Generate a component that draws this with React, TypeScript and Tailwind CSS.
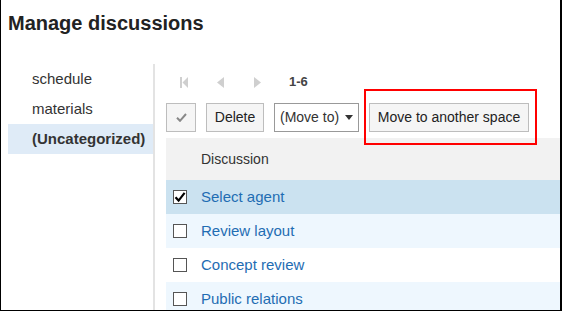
import React from "react";

const rows = [
  { name: "Select agent", checked: true, bg: "bg-[#cbe2f0]" },
  { name: "Review layout", checked: false, bg: "bg-[#eef7fe]" },
  { name: "Concept review", checked: false, bg: "bg-white" },
  { name: "Public relations", checked: false, bg: "bg-[#eef7fe]" },
];

const folders = [
  { name: "schedule", active: false },
  { name: "materials", active: false },
  { name: "(Uncategorized)", active: true },
];

function Checkbox({ checked }: { checked: boolean }) {
  return (
    <span className="flex h-[14px] w-[14px] items-center justify-center border border-[#555] bg-white">
      {checked && (
        <svg width="12" height="12" viewBox="0 0 12 12">
          <path d="M1.5 6.2 L4.6 9.6 L10.6 1.8" fill="none" stroke="#000" strokeWidth="2.2" />
        </svg>
      )}
    </span>
  );
}

export default function App() {
  return (
    <div
      className="relative h-[311px] w-[562px] overflow-hidden border-b border-l border-r-2 border-black bg-white text-[#333]"
      style={{ fontFamily: '"Liberation Sans", Arial, sans-serif' }}
    >
      <h1 className="ml-[7px] mt-[11px] text-[20px] font-bold leading-[24px] text-[#222]">
        Manage discussions
      </h1>

      <div className="mt-[29px] flex h-[300px]">
        {/* folder list */}
        <div className="ml-[7px] w-[145px] shrink-0">
          {folders.map((f) => (
            <div
              key={f.name}
              className={
                f.active
                  ? "flex h-[30px] items-center bg-[#dfebf7] pl-[24px] text-[15px] font-bold text-[#333]"
                  : "flex h-[30px] items-center pl-[24px] text-[15px] text-[#333]"
              }
            >
              {f.name}
            </div>
          ))}
        </div>
        <div className="w-[2px] shrink-0 bg-[#e3e3e3]" />

        {/* discussion list */}
        <div className="flex-1 pl-[11px] pt-[3px]">
          <div className="flex h-[30px] items-center">
            <svg width="8" height="11" viewBox="0 0 8 11" className="ml-[14px]">
              <rect x="0" y="0" width="2" height="11" fill="#cfcfcf" />
              <path d="M8 0 L2.5 5.5 L8 11 Z" fill="#cfcfcf" />
            </svg>
            <svg width="7" height="11" viewBox="0 0 7 11" className="ml-[29px]">
              <path d="M7 0 L0 5.5 L7 11 Z" fill="#cfcfcf" />
            </svg>
            <svg width="7" height="11" viewBox="0 0 7 11" className="ml-[30px]">
              <path d="M0 0 L7 5.5 L0 11 Z" fill="#cfcfcf" />
            </svg>
            <span className="ml-[28px] text-[13px] font-bold text-[#444]">1-6</span>
          </div>

          <div className="mt-[6px] flex h-[29px] items-stretch gap-[10px] text-[14px]">
            <button className="flex w-[30px] items-center justify-center border border-[#bdbdbd] bg-[#f5f5f5]">
              <svg width="11" height="9" viewBox="0 0 11 9">
                <path d="M1 4.8 L4 7.8 L10 1" fill="none" stroke="#888" strokeWidth="2" />
              </svg>
            </button>
            <button className="w-[58px] border border-[#bdbdbd] bg-[#f5f5f5] text-[#222]">Delete</button>
            <div className="flex w-[85px] items-center border border-[#999] bg-white pl-[5px] text-[#333]">
              (Move to)
              <svg width="8" height="5" viewBox="0 0 8 5" className="ml-[6px]">
                <path d="M0 0 L8 0 L4 5 Z" fill="#333" />
              </svg>
            </div>
            <button className="w-[160px] border border-[#bdbdbd] bg-[#f5f5f5] text-[#222]">
              Move to another space
            </button>
          </div>

          <div className="mt-[6px] flex h-[42px] items-center bg-[#f2f2f2] pl-[35px] text-[14px] text-[#333]">
            Discussion
          </div>

          {rows.map((r) => (
            <div key={r.name} className={`flex h-[34px] items-center ${r.bg}`}>
              <span className="ml-[7px]">
                <Checkbox checked={r.checked} />
              </span>
              <span className="ml-[14px] text-[15px] text-[#1f6db3]">{r.name}</span>
            </div>
          ))}
        </div>
      </div>

      <div className="absolute left-[363px] top-[89px] h-[56px] w-[173px] border-2 border-[#ff0000]" />
    </div>
  );
}
